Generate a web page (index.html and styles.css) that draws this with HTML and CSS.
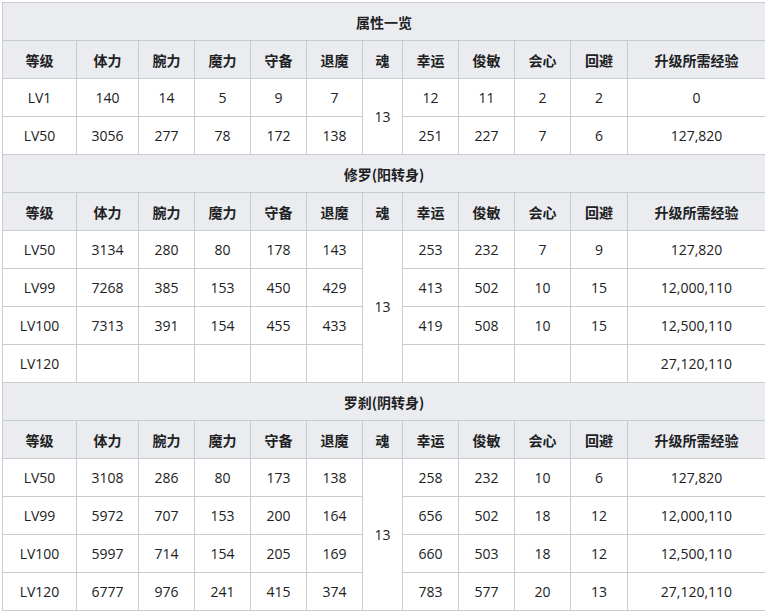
FILE: index.html
```html
<!DOCTYPE html>
<html lang="zh">
<head>
<meta charset="utf-8">
<link rel="stylesheet" href="styles.css">
</head>
<body>
<table class="stats">
<colgroup>
<col class="c-lv"><col class="c-hp"><col class="c-n"><col class="c-n"><col class="c-n"><col class="c-n"><col class="c-soul"><col class="c-n"><col class="c-n"><col class="c-n"><col class="c-ev"><col class="c-exp">
</colgroup>
<tbody>
<tr class="title"><th colspan="12">属性一览</th></tr>
<tr class="head"><th>等级</th><th>体力</th><th>腕力</th><th>魔力</th><th>守备</th><th>退魔</th><th>魂</th><th>幸运</th><th>俊敏</th><th>会心</th><th>回避</th><th>升级所需经验</th></tr>
<tr><td>LV1</td><td>140</td><td>14</td><td>5</td><td>9</td><td>7</td><td rowspan="2">13</td><td>12</td><td>11</td><td>2</td><td>2</td><td>0</td></tr>
<tr><td>LV50</td><td>3056</td><td>277</td><td>78</td><td>172</td><td>138</td><td>251</td><td>227</td><td>7</td><td>6</td><td>127,820</td></tr>
<tr class="title"><th colspan="12">修罗(阳转身)</th></tr>
<tr class="head"><th>等级</th><th>体力</th><th>腕力</th><th>魔力</th><th>守备</th><th>退魔</th><th>魂</th><th>幸运</th><th>俊敏</th><th>会心</th><th>回避</th><th>升级所需经验</th></tr>
<tr><td>LV50</td><td>3134</td><td>280</td><td>80</td><td>178</td><td>143</td><td rowspan="4">13</td><td>253</td><td>232</td><td>7</td><td>9</td><td>127,820</td></tr>
<tr><td>LV99</td><td>7268</td><td>385</td><td>153</td><td>450</td><td>429</td><td>413</td><td>502</td><td>10</td><td>15</td><td>12,000,110</td></tr>
<tr><td>LV100</td><td>7313</td><td>391</td><td>154</td><td>455</td><td>433</td><td>419</td><td>508</td><td>10</td><td>15</td><td>12,500,110</td></tr>
<tr><td>LV120</td><td></td><td></td><td></td><td></td><td></td><td></td><td></td><td></td><td></td><td>27,120,110</td></tr>
<tr class="title"><th colspan="12">罗刹(阴转身)</th></tr>
<tr class="head"><th>等级</th><th>体力</th><th>腕力</th><th>魔力</th><th>守备</th><th>退魔</th><th>魂</th><th>幸运</th><th>俊敏</th><th>会心</th><th>回避</th><th>升级所需经验</th></tr>
<tr><td>LV50</td><td>3108</td><td>286</td><td>80</td><td>173</td><td>138</td><td rowspan="4">13</td><td>258</td><td>232</td><td>10</td><td>6</td><td>127,820</td></tr>
<tr><td>LV99</td><td>5972</td><td>707</td><td>153</td><td>200</td><td>164</td><td>656</td><td>502</td><td>18</td><td>12</td><td>12,000,110</td></tr>
<tr><td>LV100</td><td>5997</td><td>714</td><td>154</td><td>205</td><td>169</td><td>660</td><td>503</td><td>18</td><td>12</td><td>12,500,110</td></tr>
<tr><td>LV120</td><td>6777</td><td>976</td><td>241</td><td>415</td><td>374</td><td>783</td><td>577</td><td>20</td><td>13</td><td>27,120,110</td></tr>
</tbody>
</table>
</body>
</html>
```
FILE: styles.css
```css
html, body {
  background: #ffffff;
}
body {
  margin: 2px;
  font-family: "Open Sans", "Noto Sans CJK SC", sans-serif;
  font-size: 14px;
  color: #202122;
}
.stats {
  border-collapse: collapse;
  table-layout: fixed;
  width: 764px;
}
.c-lv { width: 74px; }
.c-hp { width: 62px; }
.c-n { width: 56px; }
.c-soul { width: 40px; }
.c-ev { width: 57px; }
.c-exp { width: 138px; }
.stats tr {
  height: 38px;
}
.stats th,
.stats td {
  border: 1px solid #c8ccd1;
  padding: 0;
  text-align: center;
  vertical-align: middle;
  line-height: 20px;
}
.stats th {
  background: #eaecf0;
  font-weight: bold;
  font-family: "Noto Sans CJK SC", sans-serif;
}
```
